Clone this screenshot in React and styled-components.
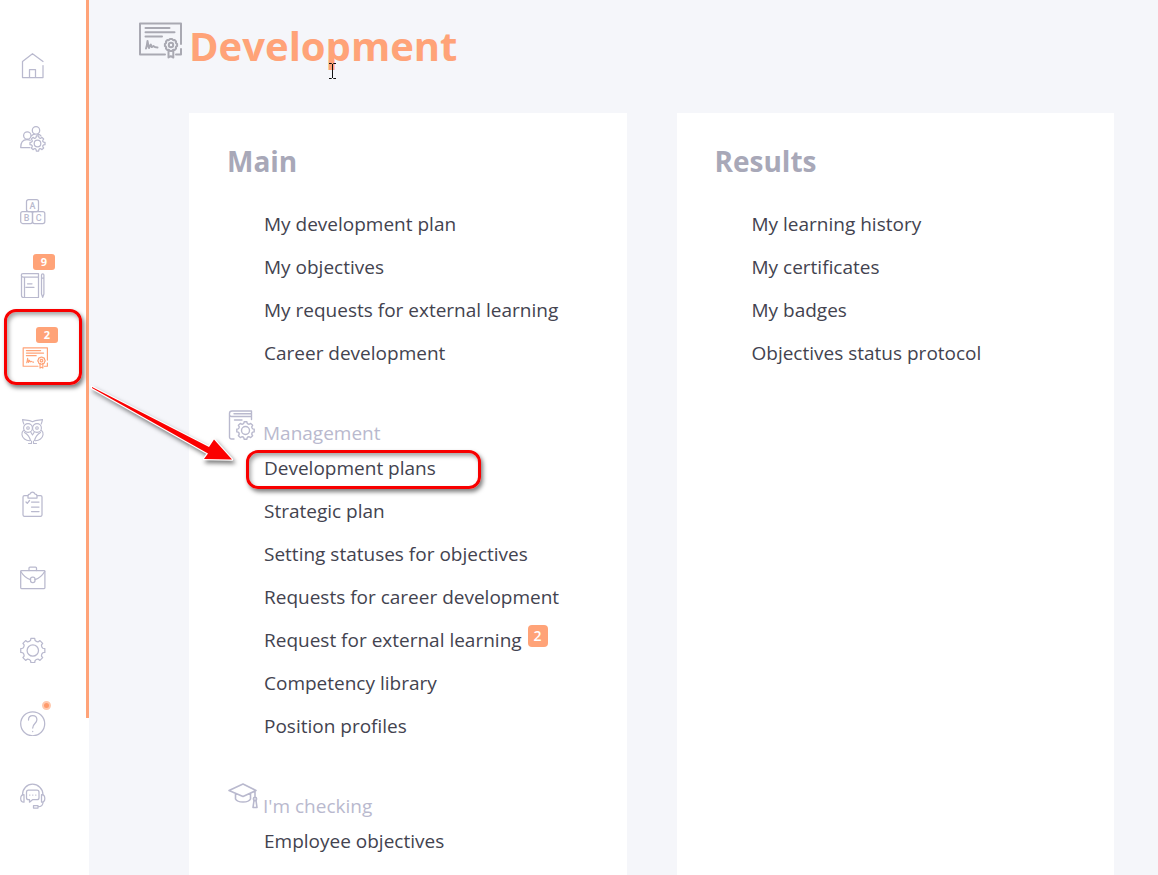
import React from 'react';
import styled, { createGlobalStyle } from 'styled-components';

const GlobalStyle = createGlobalStyle`
    * {
        box-sizing: border-box;
    }

    body {
        margin: 0;
        background: #f5f6fa;
        color: #43434f;
        font-family: 'Open Sans', 'Noto Sans', sans-serif;
    }
`;

const Shell = styled.div`
    position: relative;
    display: flex;
    min-height: 100vh;
`;

const Sidebar = styled.aside`
    display: flex;
    flex: none;
    width: 89px;
    background: #ffffff;
`;

const Nav = styled.nav`
    flex: 1;
    padding-top: 31px;
`;

const Rail = styled.div`
    width: 3px;
    height: 718px;
    background: #ffa378;
`;

const SideLink = styled.a`
    position: relative;
    display: flex;
    height: 73px;
    padding: 22px 0 0 ${({ $active }) => ($active ? 22 : 20)}px;
    color: ${({ $active }) => ($active ? '#ffa378' : '#b9b9ce')};

    svg {
        width: 26px;
        height: 26px;
    }
`;

const SideBadge = styled.span`
    position: absolute;
    top: 4px;
    left: ${({ $active }) => ($active ? 36 : 33)}px;
    width: 22px;
    border-radius: 3px;
    background: #ffa378;
    color: #ffffff;
    font-size: 11px;
    font-weight: 700;
    line-height: 16px;
    text-align: center;
`;

const Dot = styled.span`
    position: absolute;
    top: 13px;
    left: 42px;
    width: 9px;
    height: 9px;
    border: 2px solid #ffc9ae;
    border-radius: 50%;
    background: #ff9a6b;
`;

const Mark = styled.span`
    position: absolute;
    border: 3px solid #f80000;
    border-radius: 12px;
    box-shadow: 2px 3px 4px rgba(0, 0, 0, 0.5),
        inset 2px 3px 4px rgba(0, 0, 0, 0.35);
    pointer-events: none;
`;

const SideMark = styled(Mark)`
    top: -14px;
    left: 4px;
    width: 78px;
    height: 76px;
`;

const RowMark = styled(Mark)`
    top: 3px;
    left: -18px;
    width: 235px;
    height: 39px;
`;

const Content = styled.main`
    display: flex;
    flex: 1;
    flex-direction: column;
    padding: 0 44px 0 49px;
`;

const Header = styled.header`
    display: flex;
    gap: 7px;
    padding: 16px 0 37px;

    svg {
        width: 44px;
        height: 37px;
        margin-top: 6px;
        color: #a9a9b2;
    }
`;

const Title = styled.h1`
    margin: 0;
    color: #ffa378;
    font-size: 40px;
    font-weight: 700;
    line-height: 60px;
`;

const Columns = styled.div`
    display: grid;
    flex: 1;
    grid-template-columns: 1fr 1fr;
    gap: 50px;
    padding-left: 51px;
`;

const Card = styled.section`
    padding: 28px 38px 0;
    background: #ffffff;
`;

const CardTitle = styled.h2`
    margin: 0 0 22px;
    color: #a8a8b8;
    font-size: 28px;
    font-weight: 700;
    line-height: 40px;
`;

const GroupHeader = styled.div`
    display: flex;
    gap: 5px;
    height: 38px;
    margin-top: 34px;
    padding-left: 1px;
    color: #b9b9ce;

    svg {
        width: 30px;
        height: 31px;
    }
`;

const GroupTitle = styled.h3`
    align-self: flex-end;
    margin: 0;
    font-size: 19px;
    font-weight: 400;
    line-height: 28px;
`;

const List = styled.ul`
    margin: 0;
    padding: 0 0 0 37px;
    list-style: none;
`;

const Row = styled.li`
    position: relative;
    display: flex;
    gap: 6px;
    line-height: 43px;
`;

const RowLink = styled.a`
    color: inherit;
    font-size: 19px;
    text-decoration: none;
    white-space: nowrap;
`;

const RowBadge = styled.span`
    width: 20px;
    height: 22px;
    margin-top: 6px;
    border-radius: 4px;
    background: #ffa378;
    color: #ffffff;
    font-size: 14px;
    font-weight: 600;
    line-height: 22px;
    text-align: center;
`;

const Arrow = styled.svg`
    position: absolute;
    top: 380px;
    left: 84px;
    width: 160px;
    height: 90px;
    filter: drop-shadow(2px 3px 2px rgba(0, 0, 0, 0.5));
    pointer-events: none;
`;

const Cursor = styled.svg`
    position: absolute;
    top: 63px;
    left: 328px;
    width: 9px;
    height: 16px;
    pointer-events: none;
`;

// Outline of a cog with `teeth` teeth around (cx, cy)
const gearPath = (cx, cy, outer, inner, teeth = 8) => {
    const step = (Math.PI * 2) / teeth;
    const point = (r, a) =>
        `${(cx + r * Math.sin(a)).toFixed(2)} ${(cy - r * Math.cos(a)).toFixed(2)}`;
    let d = '';
    for (let i = 0; i < teeth; i += 1) {
        const a = i * step;
        d += `${i ? 'L' : 'M'}${point(outer, a - step * 0.2)}`;
        d += `L${point(outer, a + step * 0.2)}`;
        d += `L${point(inner + 0.6, a + step * 0.28)}`;
        d += `Q${point(inner - 0.5, a + step * 0.5)} ${point(inner + 0.6, a + step * 0.72)}`;
    }
    return `${d}Z`;
};

const Icon = ({ box = '0 0 26 26', width = 1.25, children }) => (
    <svg
        viewBox={box}
        fill="none"
        stroke="currentColor"
        strokeWidth={width}
        strokeLinecap="round"
        strokeLinejoin="round"
        aria-hidden="true"
    >
        {children}
    </svg>
);

const HomeIcon = () => (
    <Icon>
        <path d="M23 8.500 12.500.7 2.500 8.500v16H23V12.500M9.500 24v-7.500h6V24" />
    </Icon>
);

const TeamIcon = () => (
    <Icon>
        <circle cx="7.300" cy="9.500" r="3.700" />
        <circle cx="16" cy="4.400" r="3.700" />
        <path d="M11.500 9.800c.8-1 1.700-1.500 3-1.700M17.500 8.100c1.800.2 3 .8 3.500 2" />
        <path d="M10 21.500H.7c0-5 2-8 6.200-8 1.400 0 2.300.2 3.200.8" />
        <path d={gearPath(17.5, 17.5, 7.6, 5.7)} />
        <circle cx="17.500" cy="17.500" r="3.300" />
    </Icon>
);

const BlocksIcon = () => (
    <Icon>
        <rect x="6.500" y=".7" width="12" height="11.800" rx="2" />
        <rect x=".7" y="12.500" width="11.800" height="12" rx="2" />
        <rect x="12.500" y="12.500" width="12.300" height="12" rx="2" />
        <g
            fill="currentColor"
            stroke="none"
            fontFamily="Roboto, sans-serif"
            fontSize="9"
            fontWeight="500"
            textAnchor="middle"
        >
            <text x="12.500" y="10">A</text>
            <text x="6.500" y="22">B</text>
            <text x="18.700" y="22">C</text>
        </g>
    </Icon>
);

const NotebookIcon = () => (
    <Icon>
        <path d="M18.500 5H3a1.700 1.700 0 0 1 0-3.500h15.500v24H3.500a2 2 0 0 1-2-2v-20M4.500 5v20" />
        <path d="M7.500 11.800h4.500M5.800 15.300h8.200" />
        <path d="M21.500 4V3a1.200 1.200 0 0 1 2.400 0v19l-1.200 3.300-1.200-3.300zM21.500 6H24" />
    </Icon>
);

const CertificateIcon = () => (
    <Icon box="0 0 44 37" width={2}>
        <path d="M27 32.500H2v-31h41V22M43 27v5.500h-5" />
        <path d="M7.500 6h24M7.500 10.200h29M7.500 14.500h16.500" />
        <path d="M8 26.500c1-2.500 1.200-4.500 1.500-7.500.5 3 .8 5 1.500 7 .5-2 1-3 1.800-3.500.2 1.500.6 2.500 1.200 2.500.6 0 .8-1 1.500-1 .6.800 1.500 1.500 4 1.500" />
        <path d={gearPath(33, 23, 6.2, 5.3)} />
        <circle cx="33" cy="23" r="2.200" />
        <path d="M30.500 28.500v7l2.300-1.300 2.500 1.300v-7" />
    </Icon>
);

const OwlIcon = () => (
    <Icon width={1.1}>
        <path d="M2.500 1.500c3 1.200 6-.2 10 2.200 4-2.400 7-1 10-2.200-.3 2-.8 3-1.300 4.500M2.500 1.500c.3 2 .8 3 1.300 4.500" />
        <circle cx="8" cy="10" r="4.400" />
        <circle cx="17" cy="10" r="4.400" />
        <circle cx="8" cy="10" r="1.300" />
        <circle cx="17" cy="10" r="1.300" />
        <path d="M10.700 14l1.800 3 1.800-3M3.500 12.500c-2.500 2-2 6 1 8.500 1.500 1.200 3 1.700 5 1.700M21.500 12.500c2.500 2 2 6-1 8.500-1.500 1.200-3 1.700-5 1.700M4.500 14.500c2.500 1.500 5 4 6 8M20.500 14.500c-2.500 1.500-5 4-6 8" />
        <path d="M8.500 25.500h3V23M16.500 25.500h-3V23" />
    </Icon>
);

const ClipboardIcon = () => (
    <Icon>
        <path d="M8 4.500H4.500A1.500 1.500 0 0 0 3 6v18a1.500 1.500 0 0 0 1.500 1.300h16A1.500 1.500 0 0 0 22 24V6a1.500 1.500 0 0 0-1.500-1.500H17" />
        <path d="M8 7V4.500C8 3.500 8.800 3 10 3c.5-1.200 1.200-2 2.500-2s2 .8 2.500 2c1.200 0 2 .5 2 1.500V7z" />
        <path d="M6 11l1.300 1.300L9.500 9.500M11.500 11H19M11.500 16H19M11.500 20.500H19" />
    </Icon>
);

const BriefcaseIcon = () => (
    <Icon>
        <rect x=".7" y="6.500" width="24.200" height="18" rx=".8" />
        <path d="M9 6.500V4c0-.6.4-1 1-1h5.500c.6 0 1 .4 1 1v2.500M.8 7.500c2.700 4.500 5.700 7 9.700 8.200M24.700 7.500c-2.700 4.500-5.700 7-9.700 8.200" />
        <rect x="10.500" y="13" width="4.500" height="5.500" rx="2" />
    </Icon>
);

const SettingsIcon = () => (
    <Icon>
        <path d={gearPath(12.8, 13.5, 12.2, 9.7)} />
        <circle cx="12.800" cy="13.500" r="5.700" />
    </Icon>
);

const HelpIcon = () => (
    <Icon>
        <circle cx="12.700" cy="13.800" r="12" />
        <path d="M8.500 10c0-2.500 1.700-4.300 4.200-4.300s4.200 1.800 4.200 4.100c0 3.600-4.200 4-4.200 8.200M12.700 21.300v.2" />
    </Icon>
);

const SupportIcon = () => (
    <Icon>
        <path d="M2.500 11.700c0-6 4.500-10.500 10-10.500S23 5.700 23 11.700" />
        <path d="M4 11.700c-2 0-3.300 1-3.300 3.800s1.300 3.700 3.300 3.700zM21.500 11.700c2 0 3.300 1 3.300 3.800s-1.300 3.700-3.300 3.700z" />
        <path d="M8.500 7.200H17a2 2 0 0 1 2 2v5.500a2 2 0 0 1-2 2h-4.500l-3 2.500v-2.500h-1a2 2 0 0 1-2-2V9.200a2 2 0 0 1 2-2zM9.700 12h.2M12.700 12h.2M15.700 12h.2" />
        <path d="M23 19.200c0 3-1.500 4.500-5 4.500M13.500 22.700H18V25h-4.500z" />
    </Icon>
);

const ManagementIcon = () => (
    <Icon box="0 0 30 31" width={1.4}>
        <path d="M6 30H3.500a2 2 0 0 1-2-2V4.500A2.500 2.500 0 0 1 4 2h19.500v8.500M23.500 7.500H3.500c-1 0-1.800-.5-2-1.500M6 4.800h17M6.500 11H14" />
        <path d={gearPath(17.5, 21.5, 8.8, 6.9)} />
        <circle cx="17.500" cy="21.500" r="4" />
    </Icon>
);

const GraduationIcon = () => (
    <Icon box="0 0 30 31" width={1.6}>
        <path d="M1 8.500 15 2l13 6.500L15 14.500zM7.500 11.500v5.500c2 4 13 4 15 0v-5.500M27 9.500v5" />
        <circle cx="27" cy="17" r="1.600" />
        <path d="M26 18.500h2l1 7h-4z" />
    </Icon>
);

const sideItems = [
    { label: 'Home', icon: HomeIcon },
    { label: 'Employees', icon: TeamIcon },
    { label: 'Learning', icon: BlocksIcon },
    { label: 'Journal', icon: NotebookIcon, badge: 9 },
    { label: 'Development', icon: CertificateIcon, badge: 2, active: true },
    { label: 'Knowledge', icon: OwlIcon },
    { label: 'Surveys', icon: ClipboardIcon },
    { label: 'Recruitment', icon: BriefcaseIcon },
    { label: 'Settings', icon: SettingsIcon },
    { label: 'Help', icon: HelpIcon, dot: true },
    { label: 'Support', icon: SupportIcon },
];

const mainRows = [
    { text: 'My development plan' },
    { text: 'My objectives' },
    { text: 'My requests for external learning' },
    { text: 'Career development' },
];

const managementRows = [
    { text: 'Development plans', marked: true },
    { text: 'Strategic plan' },
    { text: 'Setting statuses for objectives' },
    { text: 'Requests for career development' },
    { text: 'Request for external learning', badge: 2 },
    { text: 'Competency library' },
    { text: 'Position profiles' },
];

const checkingRows = [{ text: 'Employee objectives' }];

const resultRows = [
    { text: 'My learning history' },
    { text: 'My certificates' },
    { text: 'My badges' },
    { text: 'Objectives status protocol' },
];

const Rows = ({ rows }) => (
    <List>
        {rows.map(({ text, badge, marked }) => (
            <Row key={text}>
                <RowLink href="#">{text}</RowLink>
                {badge && <RowBadge>{badge}</RowBadge>}
                {marked && <RowMark />}
            </Row>
        ))}
    </List>
);

export default () => (
    <>
        <GlobalStyle />
        <Shell>
            <Sidebar>
                <Nav>
                    {sideItems.map(({ label, icon: ItemIcon, badge, active, dot }) => (
                        <SideLink key={label} href="#" aria-label={label} $active={active}>
                            <ItemIcon />
                            {badge && <SideBadge $active={active}>{badge}</SideBadge>}
                            {dot && <Dot />}
                            {active && <SideMark />}
                        </SideLink>
                    ))}
                </Nav>
                <Rail />
            </Sidebar>
            <Content>
                <Header>
                    <CertificateIcon />
                    <Title>Development</Title>
                </Header>
                <Columns>
                    <Card>
                        <CardTitle>Main</CardTitle>
                        <Rows rows={mainRows} />
                        <GroupHeader>
                            <ManagementIcon />
                            <GroupTitle>Management</GroupTitle>
                        </GroupHeader>
                        <Rows rows={managementRows} />
                        <GroupHeader>
                            <GraduationIcon />
                            <GroupTitle>I'm checking</GroupTitle>
                        </GroupHeader>
                        <Rows rows={checkingRows} />
                    </Card>
                    <Card>
                        <CardTitle>Results</CardTitle>
                        <Rows rows={resultRows} />
                    </Card>
                </Columns>
            </Content>
            <Arrow viewBox="0 0 160 90" aria-hidden="true">
                <path
                    d="M8 7 125 67 130 59.500 148 79.500 120 79 124 73.500 8 8z"
                    fill="#fb0000"
                    stroke="#ffffff"
                    strokeWidth="2.500"
                    strokeLinejoin="round"
                    paintOrder="stroke"
                />
            </Arrow>
            <Cursor viewBox="0 0 9 16" fill="none" stroke="#111111" aria-hidden="true">
                <path d="M1 .5h2.500l1 1 1-1H8M4.500 1v14M1 15.500h2.500l1-1 1 1H8" />
            </Cursor>
        </Shell>
    </>
);
